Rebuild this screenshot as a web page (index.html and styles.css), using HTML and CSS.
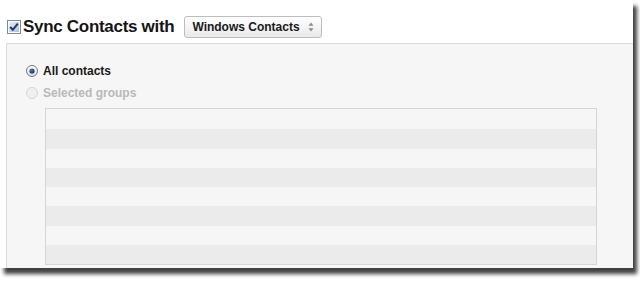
FILE: index.html
```html
<!DOCTYPE html>
<html>
<head>
<meta charset="utf-8">
<link rel="stylesheet" href="styles.css">
</head>
<body>
<div class="window">
  <div class="header">
    <svg class="check" width="14" height="14" viewBox="0 0 14 14">
      <defs>
        <linearGradient id="cb" x1="0" y1="0" x2="1" y2="1">
          <stop offset="0" stop-color="#e9f0f9"/>
          <stop offset="1" stop-color="#a9c1e2"/>
        </linearGradient>
      </defs>
      <rect x="0.5" y="0.5" width="13" height="13" fill="#fff" stroke="#7f8a99"/>
      <rect x="2" y="2" width="10" height="10" fill="url(#cb)"/>
      <path d="M3.2 7 L5.8 9.8 L10.8 3.6" fill="none" stroke="#1d3a66" stroke-width="2"/>
    </svg>
    <span class="title">Sync Contacts with</span>
    <div class="select">
      <span class="select-text">Windows Contacts</span>
      <svg class="arrows" width="6" height="10" viewBox="0 0 6 10">
        <path d="M3 0.5 L5.5 3.8 L0.5 3.8 Z" fill="#8a8a8a"/>
        <path d="M3 9.5 L5.5 6.2 L0.5 6.2 Z" fill="#8a8a8a"/>
      </svg>
    </div>
  </div>
  <div class="panel">
    <div class="option">
      <svg class="radio" width="12" height="12" viewBox="0 0 12 12">
        <defs>
          <linearGradient id="rg" x1="0" y1="0" x2="0" y2="1">
            <stop offset="0" stop-color="#ffffff"/>
            <stop offset="1" stop-color="#d8dde4"/>
          </linearGradient>
          <radialGradient id="dot" cx="0.4" cy="0.35" r="0.7">
            <stop offset="0" stop-color="#5577aa"/>
            <stop offset="1" stop-color="#142f5c"/>
          </radialGradient>
        </defs>
        <circle cx="6" cy="6" r="5.5" fill="url(#rg)" stroke="#6f7a88"/>
        <circle cx="6" cy="6" r="2.6" fill="url(#dot)"/>
      </svg>
      <span class="label">All contacts</span>
    </div>
    <div class="option disabled">
      <svg class="radio" width="12" height="12" viewBox="0 0 12 12">
        <circle cx="6" cy="6" r="5.5" fill="#f0f0f0" stroke="#d6d6d6"/>
      </svg>
      <span class="label">Selected groups</span>
    </div>
    <div class="list">
      <div class="row"></div>
      <div class="row alt"></div>
      <div class="row"></div>
      <div class="row alt"></div>
      <div class="row"></div>
      <div class="row alt"></div>
      <div class="row"></div>
      <div class="row alt"></div>
    </div>
  </div>
</div>
</body>
</html>
```
FILE: styles.css
```css
html, body {
  margin: 0;
  padding: 0;
  background: #ffffff;
}
body {
  height: 281px;
  font-family: "Liberation Sans", Arial, sans-serif;
  color: #1a1a1a;
}
.window {
  position: relative;
  z-index: 0;
  width: 633px;
  height: 268px;
  overflow: hidden;
  background: #ffffff;
  box-shadow: 4px 6px 4px rgba(0, 0, 0, 0.75);
  display: flex;
  flex-direction: column;
}
.header {
  box-sizing: border-box;
  height: 43px;
  flex: none;
  padding: 10px 0 0 7px;
  display: flex;
  align-items: center;
}
.check {
  display: block;
  margin-right: 2px;
}
.title {
  font-weight: bold;
  font-size: 17px;
  letter-spacing: -0.3px;
  color: #151515;
}
.select {
  box-sizing: border-box;
  margin-left: 10px;
  width: 138px;
  height: 22px;
  border: 1px solid #bdbdbd;
  border-radius: 3px;
  background: linear-gradient(#ffffff, #e9e9e9);
  display: flex;
  align-items: center;
  padding: 0 7px 0 7px;
}
.select-text {
  font-weight: bold;
  font-size: 12px;
  flex: 1;
  color: #1a1a1a;
}
.arrows {
  display: block;
}
.panel {
  flex: 1;
  min-height: 0;
  margin-left: 6px;
  border-top: 1px solid #dcdcdc;
  border-left: 1px solid #dcdcdc;
  background: #f6f6f6;
  padding: 20px 0 0 19px;
  display: flex;
  flex-direction: column;
}
.option {
  height: 14px;
  flex: none;
  display: flex;
  align-items: center;
  margin-bottom: 8px;
}
.radio {
  display: block;
  margin-right: 5px;
}
.label {
  font-weight: bold;
  font-size: 12px;
  color: #1a1a1a;
}
.disabled .label {
  color: #b9b9b9;
}
.list {
  flex: none;
  margin-left: 19px;
  width: 552px;
  height: 157px;
  box-sizing: border-box;
  border: 1px solid #d5d5d5;
  padding: 1px 0 0 0;
  background: #f6f6f6;
  display: flex;
  flex-direction: column;
}
.row {
  height: 19.3px;
  flex: none;
  background: #f6f6f6;
}
.row.alt {
  background: #ebebeb;
}
```
